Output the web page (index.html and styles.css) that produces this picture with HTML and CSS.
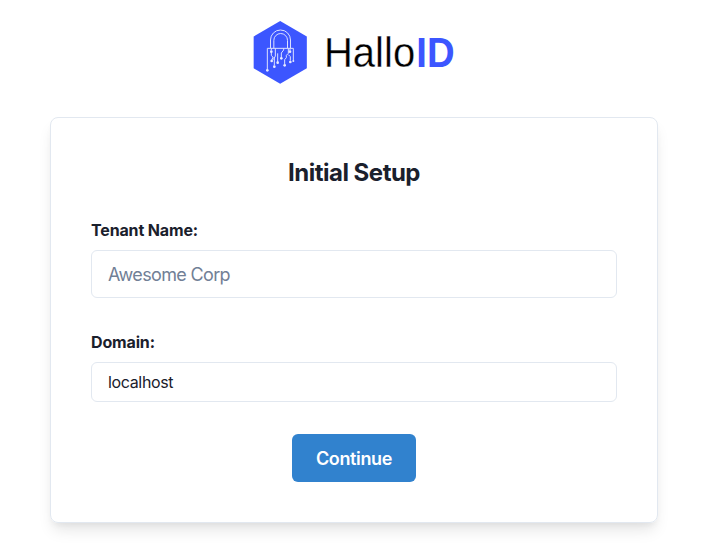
FILE: index.html
```
<!DOCTYPE html>
<html lang="en">
<head>
<meta charset="utf-8">
<title>HalloID</title>
<link rel="stylesheet" href="styles.css">
</head>
<body>
<main class="page">
  <svg class="logo" viewBox="0 0 660 222" role="img" aria-label="HalloID">
    <path class="hex" d="M120.500 33L200.500 79.500V175L120.500 221.500L41 175V79.500Z"/>
    <g class="lock">
      <path d="M91.500 114V90a30 30 0 0 1 60 0V114M101.500 114V91a20.500 20.500 0 0 1 41 0V114"/>
      <path d="M82 178V115H160V151M94 121V115M94 128V136L99 142V150M99 142L95 150M103 166V144L106 138V115M113 156V130M131 115V120L124 129V142M134 162V149L139 143V136L145 130V115M145 134L151 140V152M150 115V121"/>
    </g>
    <g class="node">
      <circle cx="82" cy="181" r="4"/><circle cx="94" cy="125" r="4"/><circle cx="95" cy="153" r="4"/>
      <circle cx="103" cy="170" r="4"/><circle cx="113" cy="158" r="4"/><circle cx="124" cy="145" r="4"/>
      <circle cx="134" cy="166" r="4"/><circle cx="151" cy="156" r="4"/><circle cx="150" cy="125" r="4"/>
      <circle cx="160" cy="153" r="3"/>
    </g>
    <text class="word thin" transform="translate(252 172) scale(.93 1)">Hallo</text>
    <text class="word id" transform="translate(529 172) scale(.89 1)">ID</text>
  </svg>
  <form class="card">
    <h1>Initial Setup</h1>
    <label for="tenant">Tenant Name:</label>
    <input class="large" id="tenant" type="text" placeholder="Awesome Corp">
    <label for="domain">Domain:</label>
    <input id="domain" type="text" value="localhost">
    <button type="button">Continue</button>
  </form>
</main>
</body>
</html>
```
FILE: styles.css
```
* { box-sizing: border-box; }
body {
  margin: 0;
  background: #fff;
  color: #1a202c;
  font-family: Inter, "Liberation Sans", sans-serif;
}
.page {
  width: 708px;
  height: 554px;
  padding-top: 10px;
  display: flex;
  flex-direction: column;
  align-items: center;
  overflow: hidden;
}
.logo {
  width: 220px;
  height: 74px;
  flex: none;
  margin-left: -8px;
}
.hex { fill: #3c56ff; }
.lock { fill: none; stroke: #dce1ff; stroke-width: 3; }
.node { fill: #e8ebff; }
.word { font: 129px "Liberation Sans", sans-serif; fill: #000; }
.thin { stroke: #fff; stroke-width: 1; }
.id { font-weight: 700; fill: #3c56ff; }
.card {
  width: 608px;
  height: 406px;
  flex: none;
  margin-top: 33px;
  padding: 40px;
  display: flex;
  flex-direction: column;
  border: 1px solid #e2e8f0;
  border-radius: 8px;
  box-shadow: 0 10px 15px -3px rgba(0,0,0,.1), 0 4px 6px -2px rgba(0,0,0,.05);
}
h1 {
  margin: 0 0 30px;
  font-size: 24px;
  line-height: 30px;
  font-weight: 650;
  letter-spacing: -.5px;
  text-align: center;
}
label {
  margin-bottom: 8px;
  font-size: 16px;
  line-height: 24px;
  font-weight: 650;
  letter-spacing: -.15px;
}
input {
  width: 526px;
  height: 40px;
  padding: 0 16px;
  border: 1px solid #e2e8f0;
  border-radius: 6px;
  background: #fff;
  color: #1a202c;
  font: 16px Inter, sans-serif;
  letter-spacing: -.35px;
}
.large {
  height: 48px;
  margin-bottom: 32px;
  font-size: 18px;
  letter-spacing: -.65px;
}
input::placeholder { color: #718096; opacity: 1; }
button {
  align-self: center;
  width: 124px;
  height: 48px;
  margin-top: 32px;
  padding: 0;
  border: 0;
  border-radius: 6px;
  background: #3182ce;
  color: #fff;
  font: 600 18px Inter, sans-serif;
  letter-spacing: -.35px;
}
```
